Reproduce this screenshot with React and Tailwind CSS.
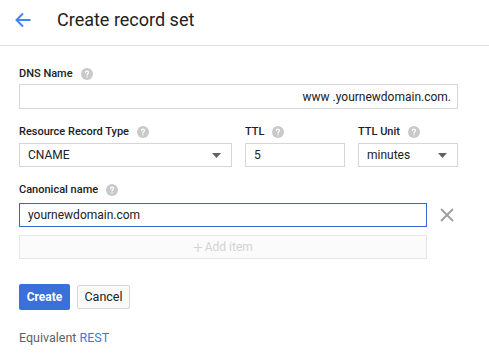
const HelpIcon = () => (
  <svg width="12" height="12" viewBox="0 0 24 24" className="ml-[8px] shrink-0">
    <circle cx="12" cy="12" r="12" fill="#c9c9c9" />
    <path
      d="M9 9.2a3 3 0 0 1 6 0c0 2-3 2.3-3 4.6"
      fill="none"
      stroke="#fff"
      strokeWidth="2.4"
      strokeLinecap="round"
    />
    <circle cx="12" cy="17.6" r="1.4" fill="#fff" />
  </svg>
);

const Caret = () => (
  <svg width="9" height="5" viewBox="0 0 9 5" className="shrink-0">
    <path d="M0 0h9L4.5 5z" fill="#616161" />
  </svg>
);

const Label = ({ children }) => (
  <div className="flex items-center h-[16px] text-[11px] font-medium text-[#212121] leading-[16px]">
    {children}
    <HelpIcon />
  </div>
);

const App = () => {
  return (
    <div
      className="w-[489px] h-[364px] bg-white overflow-hidden"
      style={{ fontFamily: "Roboto, 'Liberation Sans', sans-serif" }}
    >
      {/* Header */}
      <div className="h-[46px] border-b border-[#e0e0e0] flex items-center pl-[15px] pb-[10px] pt-[5px]">
        <svg width="16" height="16" viewBox="0 0 16 16">
          <path
            d="M15.5 8H2M8 1.5L1.5 8 8 14.5"
            fill="none"
            stroke="#4285f4"
            strokeWidth="2"
          />
        </svg>
        <h1 className="ml-[26px] text-[18px] text-[#212121] font-normal leading-[20px]">
          Create record set
        </h1>
      </div>

      <div className="px-[19px] pt-[20px]">
        {/* DNS Name */}
        <Label>DNS Name</Label>
        <div className="mt-[2px] w-[439px] h-[25px] border border-[#d6d6d6] flex items-center justify-end pr-[6px] text-[12px] text-[#212121]">
          www .yournewdomain.com.
        </div>

        {/* Type / TTL / Unit */}
        <div className="mt-[15px] flex gap-[13px]">
          <div className="w-[213px]">
            <Label>Resource Record Type</Label>
            <div className="mt-[3px] h-[24px] border border-[#d6d6d6] flex items-center justify-between pl-[8px] pr-[10px] text-[12px] text-[#212121]">
              CNAME
              <Caret />
            </div>
          </div>
          <div className="w-[100px]">
            <Label>TTL</Label>
            <div className="mt-[3px] h-[24px] border border-[#d6d6d6] flex items-center pl-[8px] text-[12px] text-[#212121]">
              5
            </div>
          </div>
          <div className="w-[100px]">
            <Label>TTL Unit</Label>
            <div className="mt-[3px] h-[24px] border border-[#d6d6d6] flex items-center justify-between pl-[8px] pr-[10px] text-[12px] text-[#212121]">
              minutes
              <Caret />
            </div>
          </div>
        </div>

        {/* Canonical name */}
        <div className="mt-[15px]">
          <Label>Canonical name</Label>
          <div className="mt-[5px] flex items-center">
            <div className="w-[408px] h-[24px] border border-[#3367d6] flex items-center pl-[8px] text-[12px] text-[#212121]">
              yournewdomain.com
            </div>
            <svg width="14" height="14" viewBox="0 0 14 14" className="ml-[13px]">
              <path d="M1 1l12 12M13 1L1 13" stroke="#9e9e9e" strokeWidth="1.8" />
            </svg>
          </div>
          <div className="mt-[8px] w-[408px] h-[24px] border border-[#e6e6e6] bg-[#fbfbfb] flex items-center justify-center text-[12px] text-[#d2d2d2]">
            <span className="text-[17px] leading-none mr-[2px] font-light">+</span>
            Add item
          </div>
        </div>

        {/* Buttons */}
        <div className="mt-[25px] flex items-center gap-[7px]">
          <button className="w-[51px] h-[26px] rounded-[2px] bg-[#3b6fd9] text-white text-[12px] font-bold">
            Create
          </button>
          <button className="w-[53px] h-[24px] rounded-[2px] border border-[#d6d6d6] bg-[#fafafa] text-[#212121] text-[12.5px]">
            Cancel
          </button>
        </div>

        <p className="mt-[20px] text-[12.5px] leading-[16px] text-[#616161]">
          Equivalent <span className="text-[#3b78e7]">REST</span>
        </p>
      </div>
    </div>
  );
};

export default App;
